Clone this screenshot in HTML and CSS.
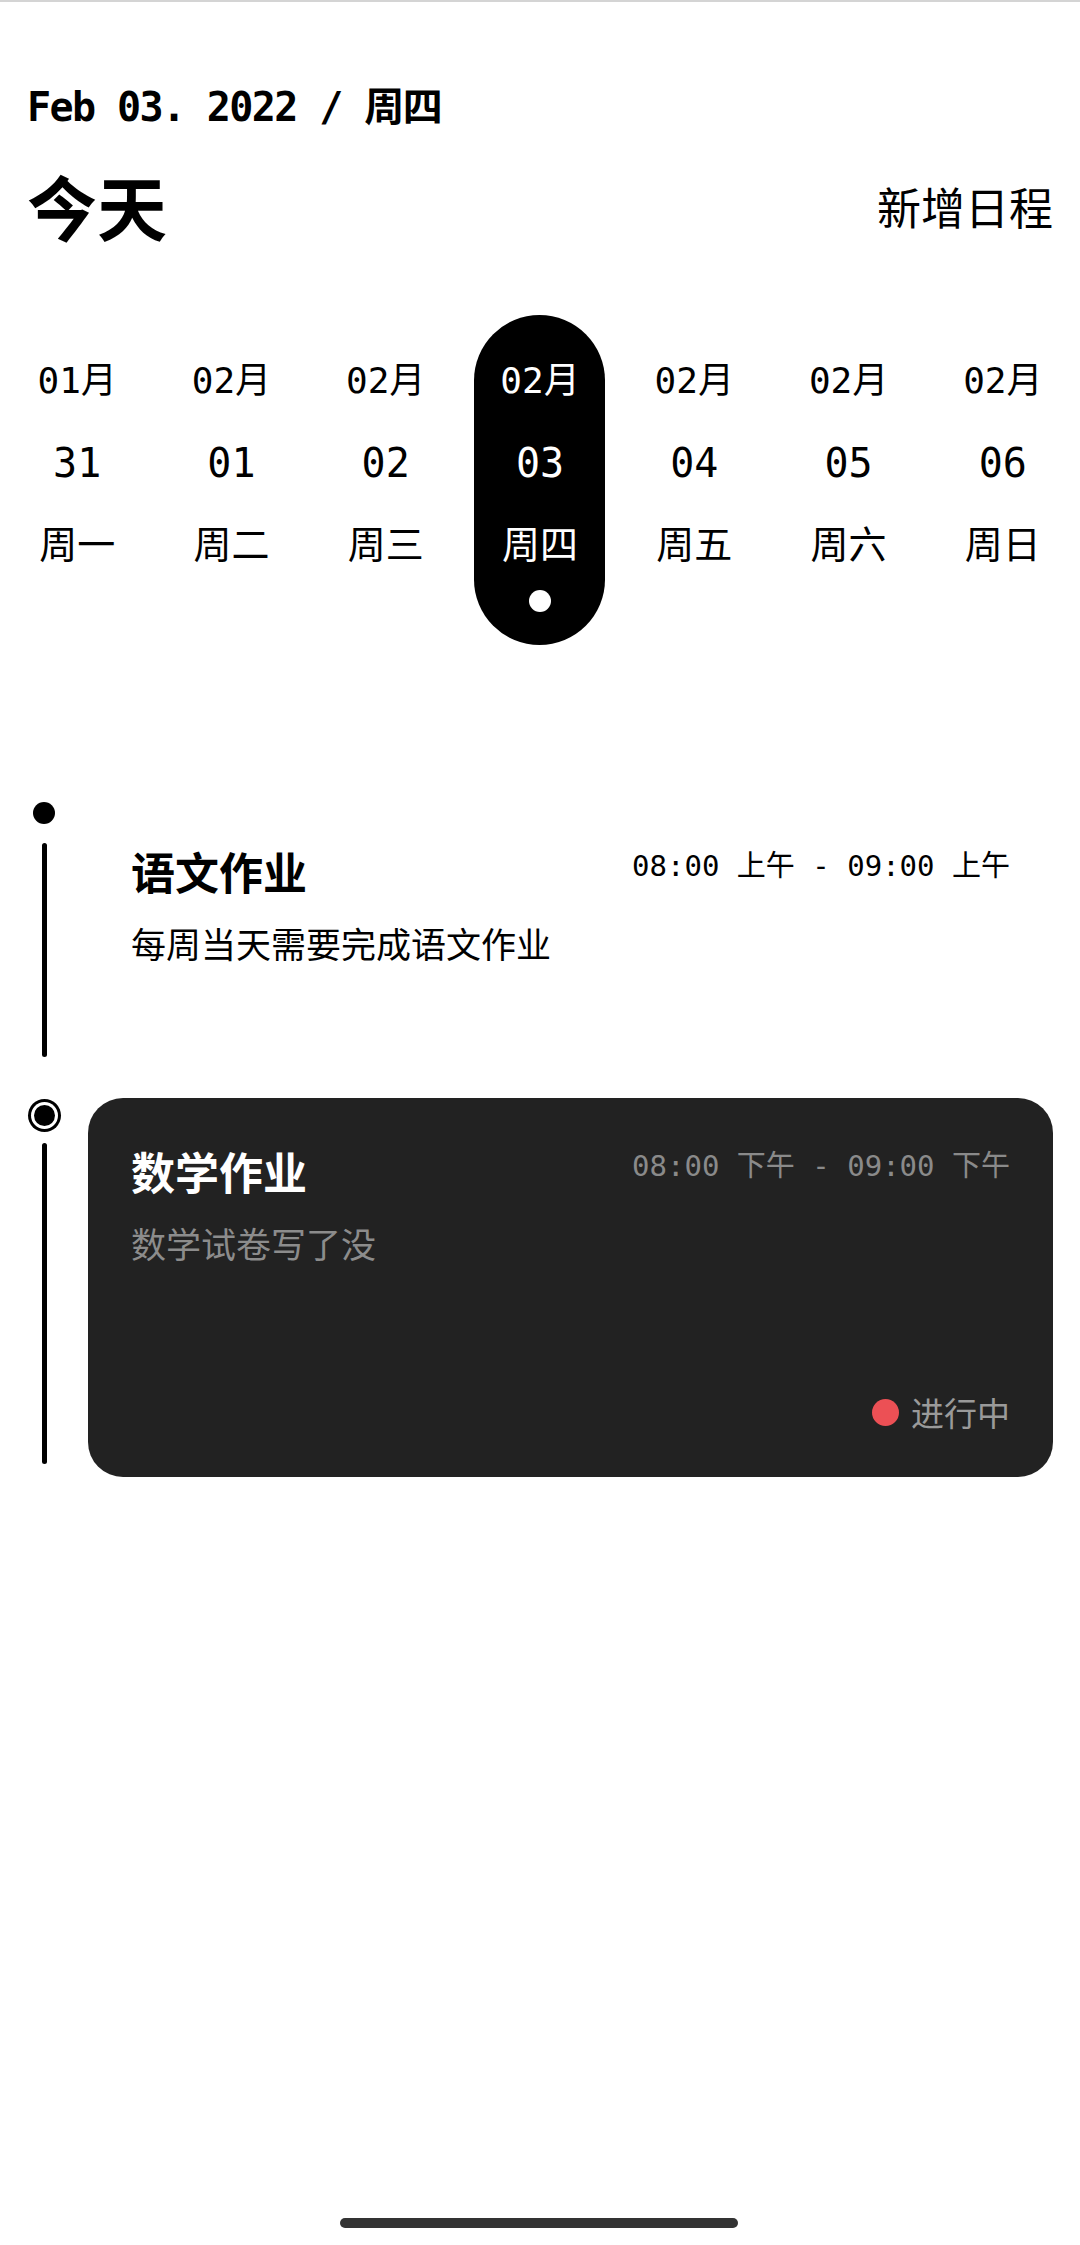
FILE: index.html
```html
<!DOCTYPE html>
<html lang="zh-CN">
<head>
<meta charset="utf-8">
<meta name="viewport" content="width=1080">
<title>今天</title>
<link rel="stylesheet" href="styles.css">
</head>
<body>
<main class="page">
  <header class="head">
    <div class="date">Feb 03. 2022 / 周四</div>
    <div class="title-row">
      <h1 class="today">今天</h1>
      <button class="add" type="button">新增日程</button>
    </div>
  </header>

  <section class="week">
    <div class="day"><span class="mon">01月</span><span class="num">31</span><span class="wd">周一</span><span class="pip"></span></div>
    <div class="day"><span class="mon">02月</span><span class="num">01</span><span class="wd">周二</span><span class="pip"></span></div>
    <div class="day"><span class="mon">02月</span><span class="num">02</span><span class="wd">周三</span><span class="pip"></span></div>
    <div class="day active"><span class="mon">02月</span><span class="num">03</span><span class="wd">周四</span><span class="pip"></span></div>
    <div class="day"><span class="mon">02月</span><span class="num">04</span><span class="wd">周五</span><span class="pip"></span></div>
    <div class="day"><span class="mon">02月</span><span class="num">05</span><span class="wd">周六</span><span class="pip"></span></div>
    <div class="day"><span class="mon">02月</span><span class="num">06</span><span class="wd">周日</span><span class="pip"></span></div>
  </section>

  <section class="timeline">
    <div class="item">
      <div class="rail">
        <div class="marker-box"><span class="marker"></span></div>
        <span class="line"></span>
      </div>
      <div class="card">
        <div class="card-head">
          <h2 class="card-title">语文作业</h2>
          <span class="time">08:00 上午 - 09:00 上午</span>
        </div>
        <p class="desc">每周当天需要完成语文作业</p>
      </div>
    </div>

    <div class="item">
      <div class="rail">
        <div class="marker-box"><span class="marker ring"></span></div>
        <span class="line"></span>
      </div>
      <div class="card dark">
        <div class="card-head">
          <h2 class="card-title">数学作业</h2>
          <span class="time">08:00 下午 - 09:00 下午</span>
        </div>
        <p class="desc">数学试卷写了没</p>
        <div class="status"><span class="status-dot"></span><span class="status-text">进行中</span></div>
      </div>
    </div>
  </section>

  <div class="home-bar"></div>
</main>
</body>
</html>
```

FILE: styles.css
```css
* {
  box-sizing: border-box;
}

html, body {
  margin: 0;
  padding: 0;
  background: #ffffff;
}

body {
  font-family: "Noto Sans CJK SC", "Noto Sans", sans-serif;
  color: #000000;
}

.page {
  min-height: 2245px;
  border-top: 2px solid #d4d4d4;
  padding: 81px 27px 0;
}

/* Header */
.date {
  font-family: "DejaVu Sans Mono", "Noto Sans CJK SC", monospace;
  font-weight: 700;
  font-size: 40px;
  line-height: 48px;
  letter-spacing: -1.6px;
}

.title-row {
  display: flex;
  justify-content: space-between;
  align-items: center;
  margin-top: 33px;
  height: 84px;
}

.today {
  margin: 0;
  font-family: "Noto Sans CJK SC", sans-serif;
  font-weight: 700;
  font-size: 70px;
  line-height: 84px;
}

.add {
  margin: 0;
  padding: 0;
  border: 0;
  background: none;
  color: #000000;
  font-family: "Noto Sans CJK SC", sans-serif;
  font-weight: 400;
  font-size: 44px;
  line-height: 60px;
}

/* Week strip */
.week {
  display: grid;
  grid-template-columns: repeat(7, 1fr);
  margin: 67px -27px 0;
}

.day {
  display: flex;
  flex-direction: column;
  align-items: center;
  justify-self: center;
  width: 131px;
  padding: 44px 0 33px;
  border-radius: 66px;
}

.day.active {
  background: #000000;
  color: #ffffff;
}

.mon {
  font-family: "DejaVu Sans Mono", "Noto Sans CJK SC", monospace;
  font-size: 36px;
  line-height: 44px;
}

.num {
  margin-top: 34px;
  font-family: "DejaVu Sans Mono", monospace;
  font-size: 40px;
  line-height: 52px;
}

.wd {
  margin-top: 29px;
  font-family: "Noto Sans CJK SC", sans-serif;
  font-size: 38px;
  line-height: 48px;
}

.pip {
  margin-top: 24px;
  width: 22px;
  height: 22px;
  border-radius: 50%;
}

.day.active .pip {
  background: #ffffff;
}

/* Timeline */
.timeline {
  margin-top: 153px;
}

.item {
  display: flex;
  gap: 27px;
}

.item + .item {
  margin-top: 28px;
}

.rail {
  flex: 0 0 34px;
  display: flex;
  flex-direction: column;
  align-items: center;
}

.marker-box {
  height: 30px;
  display: flex;
  align-items: center;
  justify-content: center;
}

.item + .item .marker-box {
  height: 34px;
}

.marker {
  width: 22px;
  height: 22px;
  border-radius: 50%;
  background: #000000;
}

.marker.ring {
  width: 21px;
  height: 21px;
  box-shadow: 0 0 0 3px #ffffff, 0 0 0 6px #000000;
}

.line {
  flex: 1;
  width: 5px;
  margin: 15px 0 13px;
  border-radius: 3px;
  background: #000000;
}

.item + .item .line {
  margin-top: 11px;
}

.card {
  flex: 1;
  min-height: 272px;
  padding: 43px;
  border-radius: 35px;
}

.card.dark {
  background: #222222;
  color: #ffffff;
}

.card-head {
  display: flex;
  justify-content: space-between;
  align-items: flex-start;
}

.card-title {
  margin: 0;
  font-family: "Noto Sans CJK SC", sans-serif;
  font-weight: 700;
  font-size: 44px;
  line-height: 60px;
}

.time {
  font-family: "DejaVu Sans Mono", "Noto Sans CJK SC", monospace;
  font-size: 29px;
  line-height: 50px;
  white-space: pre;
  color: #000000;
}

.card.dark .time {
  color: #8a8a8a;
}

.desc {
  margin: 18px 0 0;
  font-size: 35px;
  line-height: 48px;
}

.card.dark .desc {
  color: #8c8c8c;
}

.status {
  display: flex;
  justify-content: flex-end;
  align-items: center;
  gap: 12px;
  margin-top: 123px;
  font-size: 33px;
  line-height: 44px;
  color: #9a9a9a;
}

.status-dot {
  width: 27px;
  height: 27px;
  border-radius: 50%;
  background: #ec5055;
}

/* system gesture bar */
.home-bar {
  position: fixed;
  left: 50%;
  bottom: 17px;
  width: 398px;
  height: 10px;
  margin-left: -200px;
  border-radius: 5px;
  background: #333333;
}
```
